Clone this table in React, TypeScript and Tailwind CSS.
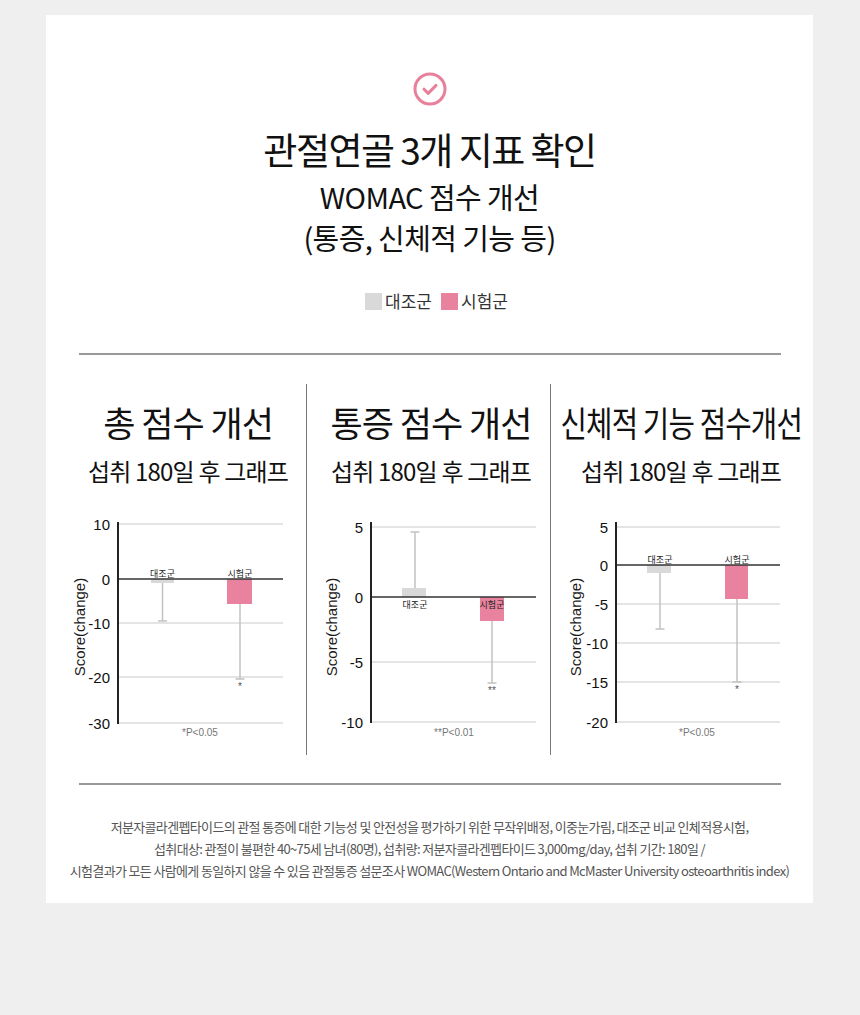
import React from "react";

const FONT = '"Noto Sans CJK KR", "Noto Sans", sans-serif';
const CHART_FONT = '"Liberation Sans", "Noto Sans CJK KR", sans-serif';
const PINK = "#e9829e";
const GRAY = "#d9d9d9";

type Tick = { label: string; y: number };
type BarDef = {
  x: number;
  w: number;
  y1: number;
  y2: number;
  color: string;
  errX: number;
  errFrom: number;
  errTo: number;
  label: string;
  labelY: number;
  star?: string;
  starY?: number;
};
type ChartDef = {
  left: number;
  width: number;
  axisX: number;
  axisTop: number;
  axisBottom: number;
  gridEnd: number;
  zeroY: number;
  ticks: Tick[];
  bars: BarDef[];
  labelX: number;
  pText: string;
  pX: number;
};

function Chart({ c }: { c: ChartDef }) {
  return (
    <svg
      width={c.width}
      height={240}
      viewBox={`${c.left} 510 ${c.width} 240`}
      className="block"
      style={{ fontFamily: CHART_FONT }}
    >
      <text
        transform={`translate(${c.labelX} 627) rotate(-90)`}
        textAnchor="middle"
        dominantBaseline="central"
        fontSize={15}
        fill="#1a1a1a"
      >
        Score(change)
      </text>
      {c.ticks.map((t) =>
        t.y === c.zeroY ? null : (
          <line
            key={"g" + t.label}
            x1={c.axisX}
            x2={c.gridEnd}
            y1={t.y}
            y2={t.y}
            stroke="#cacaca"
            strokeWidth={1}
          />
        )
      )}
      {c.ticks.map((t) => (
        <text
          key={"t" + t.label}
          x={c.axisX - 8}
          y={t.y}
          textAnchor="end"
          dominantBaseline="central"
          fontSize={15}
          fill="#111"
        >
          {t.label}
        </text>
      ))}
      {c.bars.map((b) => (
        <g key={b.label}>
          <line
            x1={b.errX}
            x2={b.errX}
            y1={b.errFrom}
            y2={b.errTo}
            stroke="#c2c2c2"
            strokeWidth={1.5}
          />
          <line
            x1={b.errX - 4.5}
            x2={b.errX + 4.5}
            y1={b.errTo}
            y2={b.errTo}
            stroke="#c2c2c2"
            strokeWidth={1.5}
          />
          <rect x={b.x} y={b.y1} width={b.w} height={b.y2 - b.y1} fill={b.color} />
          {b.star && (
            <text
              x={b.errX}
              y={b.starY}
              textAnchor="middle"
              dominantBaseline="central"
              fontSize={10}
              fill="#555"
            >
              {b.star}
            </text>
          )}
        </g>
      ))}
      <line
        x1={c.axisX}
        x2={c.gridEnd}
        y1={c.zeroY}
        y2={c.zeroY}
        stroke="#333"
        strokeWidth={1.5}
      />
      <line
        x1={c.axisX}
        x2={c.axisX}
        y1={c.axisTop}
        y2={c.axisBottom}
        stroke="#222"
        strokeWidth={2}
      />
      {c.bars.map((b) => (
        <text
          key={"l" + b.label}
          x={b.errX}
          y={b.labelY}
          textAnchor="middle"
          dominantBaseline="central"
          fontSize={9}
          fill="#222"
          style={{ fontFamily: FONT }}
        >
          {b.label}
        </text>
      ))}
      <text
        x={c.pX}
        y={732}
        textAnchor="middle"
        dominantBaseline="central"
        fontSize={10}
        fill="#777"
      >
        {c.pText}
      </text>
    </svg>
  );
}

const chart1: ChartDef = {
  left: 66,
  width: 240,
  axisX: 118,
  axisTop: 522,
  axisBottom: 724,
  gridEnd: 283,
  zeroY: 579,
  ticks: [
    { label: "10", y: 524 },
    { label: "0", y: 579 },
    { label: "-10", y: 623 },
    { label: "-20", y: 677 },
    { label: "-30", y: 723 },
  ],
  bars: [
    {
      x: 151,
      w: 23,
      y1: 579,
      y2: 583,
      color: GRAY,
      errX: 162.5,
      errFrom: 583,
      errTo: 621,
      label: "대조군",
      labelY: 573,
    },
    {
      x: 227,
      w: 25,
      y1: 579,
      y2: 604,
      color: PINK,
      errX: 240,
      errFrom: 604,
      errTo: 679,
      label: "시험군",
      labelY: 573,
      star: "*",
      starY: 686,
    },
  ],
  labelX: 79,
  pText: "*P<0.05",
  pX: 200,
};

const chart2: ChartDef = {
  left: 307,
  width: 243,
  axisX: 371,
  axisTop: 522,
  axisBottom: 723,
  gridEnd: 536,
  zeroY: 597,
  ticks: [
    { label: "5", y: 527 },
    { label: "0", y: 597 },
    { label: "-5", y: 662 },
    { label: "-10", y: 722 },
  ],
  bars: [
    {
      x: 402,
      w: 24,
      y1: 588,
      y2: 597,
      color: GRAY,
      errX: 415,
      errFrom: 588,
      errTo: 532,
      label: "대조군",
      labelY: 604,
    },
    {
      x: 480,
      w: 24,
      y1: 597,
      y2: 621,
      color: PINK,
      errX: 492,
      errFrom: 621,
      errTo: 683,
      label: "시험군",
      labelY: 604,
      star: "**",
      starY: 690,
    },
  ],
  labelX: 331,
  pText: "**P<0.01",
  pX: 454,
};

const chart3: ChartDef = {
  left: 551,
  width: 260,
  axisX: 616,
  axisTop: 522,
  axisBottom: 723,
  gridEnd: 780,
  zeroY: 565,
  ticks: [
    { label: "5", y: 527 },
    { label: "0", y: 565 },
    { label: "-5", y: 604 },
    { label: "-10", y: 643 },
    { label: "-15", y: 682 },
    { label: "-20", y: 722 },
  ],
  bars: [
    {
      x: 647,
      w: 24,
      y1: 565,
      y2: 573,
      color: GRAY,
      errX: 660,
      errFrom: 573,
      errTo: 629,
      label: "대조군",
      labelY: 559,
    },
    {
      x: 725,
      w: 23,
      y1: 565,
      y2: 599,
      color: PINK,
      errX: 737,
      errFrom: 599,
      errTo: 682,
      label: "시험군",
      labelY: 559,
      star: "*",
      starY: 689,
    },
  ],
  labelX: 575,
  pText: "*P<0.05",
  pX: 697,
};

export default function App() {
  return (
    <div
      className="w-full min-h-[1015px] bg-[#efefef] pt-[15px]"
      style={{ fontFamily: FONT }}
    >
      <div className="ml-[46px] flex h-[888px] w-[767px] flex-col items-center bg-white text-[#111]">
        <svg width={34} height={34} viewBox="0 0 34 34" className="mt-[57px] block">
          <circle cx={17} cy={17} r={15} fill="none" stroke="#e8809b" strokeWidth={3} />
          <path
            d="M11 17.2 L15.2 21.4 L23 13.4"
            fill="none"
            stroke="#e8809b"
            strokeWidth={3}
            strokeLinecap="round"
            strokeLinejoin="round"
          />
        </svg>
        <h1 className="mt-[23px] text-[37px] leading-[40px] font-normal tracking-[-1.5px]">
          관절연골 3개 지표 확인
        </h1>
        <p className="mt-[10px] text-[29px] leading-[34px] tracking-[-0.6px]">WOMAC 점수 개선</p>
        <p className="mt-[7px] text-[29px] leading-[34px] tracking-[-0.6px]">
          (통증, 신체적 기능 등)
        </p>
        <div className="ml-[14px] mt-[37px] flex h-[20px] items-center text-[17px] leading-[20px] text-[#333]">
          <span className="h-[17px] w-[17px] bg-[#d9d9d9]" />
          <span className="ml-[3px]">대조군</span>
          <span className="ml-[9px] h-[17px] w-[17px] bg-[#e9829e]" />
          <span className="ml-[3px]">시험군</span>
        </div>
        <div className="mt-[42px] h-[2px] w-[702px] bg-[#999]" />
        <div className="mt-[29px] flex h-[371px] self-start pl-[20px]">
          <div className="w-[240px]">
            <div className="pl-[4px] pt-[18px] text-center">
              <h2 className="text-[35px] leading-[40px] tracking-[-1px]">총 점수 개선</h2>
              <p className="mt-[14px] text-[24px] leading-[30px] tracking-[-0.8px]">
                섭취 180일 후 그래프
              </p>
            </div>
            <div className="mt-[24px]">
              <Chart c={chart1} />
            </div>
          </div>
          <div className="w-px bg-[#777]" />
          <div className="w-[243px]">
            <div className="pl-[5px] pt-[18px] text-center">
              <h2 className="text-[35px] leading-[40px] tracking-[-1px]">통증 점수 개선</h2>
              <p className="mt-[14px] text-[24px] leading-[30px] tracking-[-0.8px]">
                섭취 180일 후 그래프
              </p>
            </div>
            <div className="mt-[24px]">
              <Chart c={chart2} />
            </div>
          </div>
          <div className="w-px bg-[#777]" />
          <div className="w-[260px]">
            <div className="pt-[18px] text-center">
              <div className="flex justify-center">
                <h2 className="shrink-0 scale-x-[0.82] whitespace-nowrap text-[35px] leading-[40px] tracking-[-1px]">
                  신체적 기능 점수개선
                </h2>
              </div>
              <p className="mt-[14px] text-[24px] leading-[30px] tracking-[-0.8px]">
                섭취 180일 후 그래프
              </p>
            </div>
            <div className="mt-[24px]">
              <Chart c={chart3} />
            </div>
          </div>
        </div>
        <div className="mt-[28px] h-[2px] w-[702px] bg-[#999]" />
        <div className="mt-[31px] text-center text-[13px] leading-[22px] text-[#555] tracking-[-0.65px]">
          <p>
            저분자콜라겐펩타이드의 관절 통증에 대한 기능성 및 안전성을 평가하기 위한 무작위배정,
            이중눈가림, 대조군 비교 인체적용시험,
          </p>
          <p>
            섭취대상: 관절이 불편한 40~75세 남녀(80명), 섭취량: 저분자콜라겐펩타이드
            3,000mg/day, 섭취 기간: 180일 /
          </p>
          <p className="whitespace-nowrap">
            시험결과가 모든 사람에게 동일하지 않을 수 있음 관절통증 설문조사 WOMAC(Western Ontario
            and McMaster University osteoarthritis index)
          </p>
        </div>
      </div>
    </div>
  );
}
